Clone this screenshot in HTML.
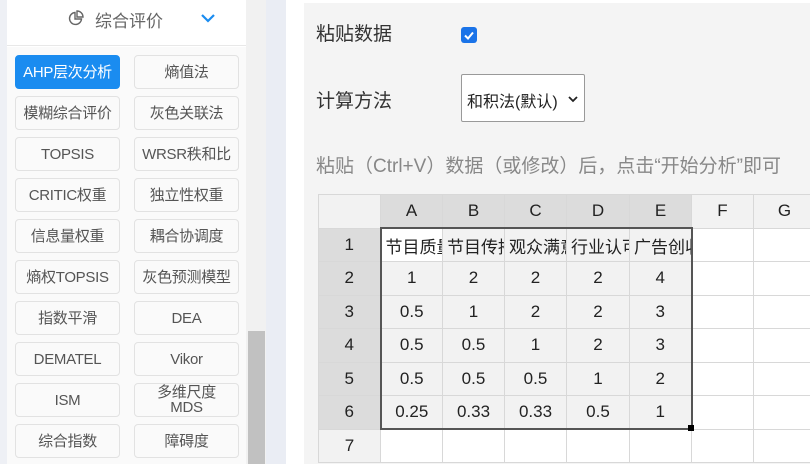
<!DOCTYPE html>
<html><head><meta charset="utf-8"><style>
*{box-sizing:border-box;margin:0;padding:0}
body{width:810px;height:464px;overflow:hidden;background:#fff;font-family:"Liberation Sans","Noto Sans CJK SC",sans-serif;position:relative}
.abs{position:absolute}
.btn{position:absolute;width:105px;height:34px;border:1px solid #e2e2e2;border-radius:4px;background:#fafafa;color:#555;font-size:15px;display:flex;align-items:center;justify-content:center;text-align:center;line-height:15px;white-space:nowrap;letter-spacing:-0.3px}
.btn.on{background:#1a8cf0;border-color:#1a8cf0;color:#fff}
.grid{position:absolute;left:318px;top:194px;border-collapse:collapse;table-layout:fixed;width:497px;font-size:17px;color:#222}
.grid td{border:1px solid #d8d8d8;height:33.5px;text-align:center;padding:0;overflow:hidden;white-space:nowrap}
.grid td.t{text-align:left;padding-left:4px;text-overflow:clip}
.grid td.h{background:#dcdcdc}
.grid td.c{background:#f2f2f2}
.grid td.w{background:#fff}
</style></head><body>
<div class="abs" style="left:0;top:0;width:7px;height:464px;background:#eef0f5"></div>
<div class="abs" style="left:7px;top:0;width:239px;height:46px;background:#fff;border-bottom:1px solid #e8e8e8"></div>
<div class="abs" style="left:7px;top:47px;width:239px;height:417px;background:#fafafa"></div>
<svg class="abs" style="left:68px;top:10px" width="16" height="16" viewBox="0 0 16 16"><path d="M7 2.5A6 6 0 1 0 13.5 9H7z" fill="none" stroke="#666" stroke-width="1.4"/><path d="M9 1v6h6A6 6 0 0 0 9 1z" fill="none" stroke="#666" stroke-width="1.4"/></svg>
<div class="abs" style="left:95px;top:7px;font-size:17px;color:#666">综合评价</div>
<svg class="abs" style="left:200px;top:13px" width="16" height="10" viewBox="0 0 16 10"><path d="M2 2l6 6 6-6" fill="none" stroke="#1a8cf0" stroke-width="2.2"/></svg>
<div class="btn on" style="left:15px;top:55px">AHP层次分析</div><div class="btn" style="left:134px;top:55px">熵值法</div>
<div class="btn" style="left:15px;top:96px">模糊综合评价</div><div class="btn" style="left:134px;top:96px">灰色关联法</div>
<div class="btn" style="left:15px;top:137px">TOPSIS</div><div class="btn" style="left:134px;top:137px">WRSR秩和比</div>
<div class="btn" style="left:15px;top:178px">CRITIC权重</div><div class="btn" style="left:134px;top:178px">独立性权重</div>
<div class="btn" style="left:15px;top:219px">信息量权重</div><div class="btn" style="left:134px;top:219px">耦合协调度</div>
<div class="btn" style="left:15px;top:260px">熵权TOPSIS</div><div class="btn" style="left:134px;top:260px">灰色预测模型</div>
<div class="btn" style="left:15px;top:301px">指数平滑</div><div class="btn" style="left:134px;top:301px">DEA</div>
<div class="btn" style="left:15px;top:342px">DEMATEL</div><div class="btn" style="left:134px;top:342px">Vikor</div>
<div class="btn" style="left:15px;top:383px">ISM</div><div class="btn" style="left:134px;top:383px">多维尺度<br>MDS</div>
<div class="btn" style="left:15px;top:424px">综合指数</div><div class="btn" style="left:134px;top:424px">障碍度</div>
<div class="abs" style="left:246px;top:0;width:20px;height:464px;background:#f1f1f1"></div>
<div class="abs" style="left:248px;top:331px;width:17px;height:133px;background:#c1c1c1"></div>
<div class="abs" style="left:266px;top:0;width:20px;height:464px;background:#eaedf4"></div>
<div class="abs" style="left:304px;top:3px;width:506px;height:461px;background:#f4f4f4"></div>
<div class="abs" style="left:316px;top:19px;font-size:19px;color:#333">粘贴数据</div>
<div class="abs" style="left:461px;top:27px;width:16px;height:16px;border-radius:3px;background:#1a73e8"><svg width="16" height="16" viewBox="0 0 16 16"><path d="M4 8.5l3 3 5-6" fill="none" stroke="#fff" stroke-width="2"/></svg></div>
<div class="abs" style="left:316px;top:86px;font-size:19px;color:#333">计算方法</div>
<div class="abs" style="left:461px;top:74px;width:124px;height:48px;background:#fff;border:1px solid #999;border-radius:2px;font-size:16px;color:#222;padding:13px 0 0 5px;white-space:nowrap;overflow:hidden"><span style="display:inline-block;width:98px;overflow:hidden;vertical-align:top">和积法(默认)</span></div>
<svg class="abs" style="left:567px;top:94px" width="12" height="10" viewBox="0 0 12 10"><path d="M2 3l4 4 4-4" fill="none" stroke="#222" stroke-width="1.8"/></svg>
<div class="abs" style="left:316px;top:151px;font-size:19px;color:#888;white-space:nowrap">粘贴（Ctrl+V）数据（或修改）后，点击“开始分析”即可</div>
<table class="grid">
<colgroup><col style="width:62px"><col style="width:62px"><col style="width:62px"><col style="width:62px"><col style="width:63px"><col style="width:62px"><col style="width:62px"><col style="width:62px"></colgroup>
<tr><td class="c"></td><td class="h">A</td><td class="h">B</td><td class="h">C</td><td class="h">D</td><td class="h">E</td><td class="c">F</td><td class="c">G</td></tr>
<tr><td class="h">1</td><td class="w t" style="border-left:2px solid #555;border-top:2px solid #555">节目质量</td><td class="c t" style="border-top:2px solid #555">节目传播</td><td class="c t" style="border-top:2px solid #555">观众满意</td><td class="c t" style="border-top:2px solid #555">行业认可</td><td class="c t" style="border-top:2px solid #555;border-right:2px solid #555">广告创收</td><td class="w"></td><td class="w"></td></tr>
<tr><td class="h">2</td><td class="c" style="border-left:2px solid #555">1</td><td class="c">2</td><td class="c">2</td><td class="c">2</td><td class="c" style="border-right:2px solid #555">4</td><td class="w"></td><td class="w"></td></tr>
<tr><td class="h">3</td><td class="c" style="border-left:2px solid #555">0.5</td><td class="c">1</td><td class="c">2</td><td class="c">2</td><td class="c" style="border-right:2px solid #555">3</td><td class="w"></td><td class="w"></td></tr>
<tr><td class="h">4</td><td class="c" style="border-left:2px solid #555">0.5</td><td class="c">0.5</td><td class="c">1</td><td class="c">2</td><td class="c" style="border-right:2px solid #555">3</td><td class="w"></td><td class="w"></td></tr>
<tr><td class="h">5</td><td class="c" style="border-left:2px solid #555">0.5</td><td class="c">0.5</td><td class="c">0.5</td><td class="c">1</td><td class="c" style="border-right:2px solid #555">2</td><td class="w"></td><td class="w"></td></tr>
<tr><td class="h">6</td><td class="c" style="border-left:2px solid #555;border-bottom:2px solid #555">0.25</td><td class="c" style="border-bottom:2px solid #555">0.33</td><td class="c" style="border-bottom:2px solid #555">0.33</td><td class="c" style="border-bottom:2px solid #555">0.5</td><td class="c" style="border-right:2px solid #555;border-bottom:2px solid #555">1</td><td class="w"></td><td class="w"></td></tr>
<tr><td class="c">7</td><td class="w"></td><td class="w"></td><td class="w"></td><td class="w"></td><td class="w"></td><td class="w"></td><td class="w"></td></tr>
</table>
<div class="abs" style="left:688px;top:425px;width:6px;height:6px;background:#000"></div>
</body></html>
